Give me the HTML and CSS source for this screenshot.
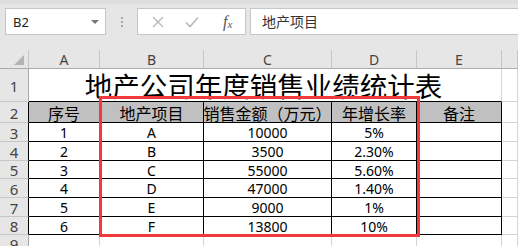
FILE: index.html
```html
<!DOCTYPE html>
<html lang="zh-CN">
<head>
    <meta charset="UTF-8">
    <title>地产公司年度销售业绩统计表</title>
    <link rel="stylesheet" href="styles.css">
</head>
<body>
    <div class="toolbar">
        <div class="namebox">
            <span>B2</span>
            <span class="caret"></span>
        </div>
        <div class="grip"><i></i><i></i><i></i></div>
        <div class="fxbox">
            <svg class="btn" width="12" height="12" viewBox="0 0 12 12">
                <path d="M1 1 L11 11 M11 1 L1 11" stroke="#b8b8b8" stroke-width="1.4" fill="none"/>
            </svg>
            <svg class="btn" width="14" height="12" viewBox="0 0 14 12">
                <path d="M1 6.5 L5 10.5 L13 1.5" stroke="#b8b8b8" stroke-width="1.6" fill="none"/>
            </svg>
            <span class="fx">f<sub>x</sub></span>
        </div>
        <div class="formula">地产项目</div>
    </div>

    <div class="sheet">
        <!-- column headers -->
        <div class="corner"><span class="tri"></span></div>
        <div class="colhead">A</div>
        <div class="colhead">B</div>
        <div class="colhead">C</div>
        <div class="colhead">D</div>
        <div class="colhead">E</div>
        <div class="colhead"></div>

        <!-- row 1: merged title -->
        <div class="rowhead">1</div>
        <div class="title">地产公司年度销售业绩统计表</div>
        <div class="cell grid after-title"></div>

        <!-- row 2: table header -->
        <div class="rowhead edge">2</div>
        <div class="cell th">序号</div>
        <div class="cell th">地产项目</div>
        <div class="cell th">销售金额（万元）</div>
        <div class="cell th">年增长率</div>
        <div class="cell th">备注</div>
        <div class="cell grid"></div>

        <div class="rowhead edge">3</div>
        <div class="cell td">1</div><div class="cell td">A</div><div class="cell td">10000</div><div class="cell td">5%</div><div class="cell td"></div><div class="cell grid"></div>

        <div class="rowhead edge">4</div>
        <div class="cell td">2</div><div class="cell td">B</div><div class="cell td">3500</div><div class="cell td">2.30%</div><div class="cell td"></div><div class="cell grid"></div>

        <div class="rowhead edge">5</div>
        <div class="cell td">3</div><div class="cell td">C</div><div class="cell td">55000</div><div class="cell td">5.60%</div><div class="cell td"></div><div class="cell grid"></div>

        <div class="rowhead edge">6</div>
        <div class="cell td">4</div><div class="cell td">D</div><div class="cell td">47000</div><div class="cell td">1.40%</div><div class="cell td"></div><div class="cell grid"></div>

        <div class="rowhead edge">7</div>
        <div class="cell td">5</div><div class="cell td">E</div><div class="cell td">9000</div><div class="cell td">1%</div><div class="cell td"></div><div class="cell grid"></div>

        <div class="rowhead edge">8</div>
        <div class="cell td">6</div><div class="cell td">F</div><div class="cell td">13800</div><div class="cell td">10%</div><div class="cell td"></div><div class="cell grid"></div>

        <div class="rowhead">9</div>
        <div class="cell blank"></div><div class="cell blank"></div><div class="cell blank"></div><div class="cell blank"></div><div class="cell blank"></div><div class="cell blank"></div>
    </div>

    <div class="highlight"></div>
</body>
</html>
```

FILE: styles.css
```css
body {
    margin: 0;
    background: #ffffff;
    font-family: "Noto Sans", "Noto Sans CJK SC", sans-serif;
    width: 518px;
    height: 246px;
    overflow: hidden;
    position: relative;
}
.toolbar {
    display: flex;
    align-items: center;
    height: 50px;
    padding-bottom: 11px;
    box-sizing: border-box;
    background: #e6e6e6;
    border-top: 4px solid #dedede;
}
.namebox {
    display: flex;
    align-items: center;
    justify-content: space-between;
    width: 101px;
    height: 27px;
    margin-left: 5px;
    padding: 0 6px 0 7px;
    box-sizing: border-box;
    background: #ffffff;
    border: 1px solid #c6c6c6;
    font-size: 13px;
    color: #222;
}
.caret {
    width: 0;
    height: 0;
    border-left: 4px solid transparent;
    border-right: 4px solid transparent;
    border-top: 4px solid #777;
}
.grip {
    display: flex;
    flex-direction: column;
    gap: 2px;
    margin: 0 14px 0 15px;
}
.grip i {
    width: 2px;
    height: 2px;
    background: #a8a8a8;
}
.fxbox {
    display: flex;
    align-items: center;
    width: 109px;
    height: 27px;
    box-sizing: border-box;
    background: #ffffff;
    border: 1px solid #c6c6c6;
    padding-left: 14px;
}
.fxbox .btn {
    margin-right: 21px;
}
.fxbox .btn + .btn {
    margin-right: 24px;
}
.fx {
    font-family: "Liberation Serif", serif;
    font-style: italic;
    font-size: 16px;
    line-height: 1;
    color: #555;
}
.fx sub {
    font-size: 11px;
    vertical-align: -1px;
}
.formula {
    flex: 1;
    height: 27px;
    margin-left: 4px;
    padding-left: 11px;
    box-sizing: border-box;
    background: #ffffff;
    border: 1px solid #c6c6c6;
    border-right: none;
    font-family: "Noto Sans CJK SC", sans-serif;
    font-size: 14px;
    line-height: 25px;
    color: #333;
}
.sheet {
    display: grid;
    grid-template-columns: 29px 71px 104px 128px 85px 85px 1fr;
    grid-template-rows: 19px 33px 21px 19px 19px 18px 19px 19px 18px 1fr;
    height: 196px;
}
.sheet > div {
    box-sizing: border-box;
    display: flex;
    align-items: center;
    justify-content: center;
    line-height: 1;
}
.corner {
    background: #e6e6e6;
    border-right: 1px solid #c6c6c6;
    border-bottom: 1px solid #ababab;
    position: relative;
}
.tri {
    position: absolute;
    right: 4px;
    bottom: 3px;
    width: 0;
    height: 0;
    border-left: 10px solid transparent;
    border-bottom: 10px solid #b4b4b4;
}
.colhead {
    background: #e6e6e6;
    border-right: 1px solid #c6c6c6;
    border-bottom: 1px solid #ababab;
    font-size: 14px;
    color: #444;
    padding-top: 2px;
}
.rowhead {
    background: #e6e6e6;
    border-right: 1px solid #ababab;
    border-bottom: 1px solid #c6c6c6;
    font-size: 15px;
    color: #444;
    padding-top: 2px;
}
.rowhead.edge {
    border-right-color: #000;
}
.title {
    grid-column: 2 / 7;
    border-right: 1px solid #d4d4d4;
    border-bottom: 1px solid #000;
    font-family: "Noto Sans CJK SC", sans-serif;
    font-size: 27.5px;
    color: #000;
    align-items: flex-end !important;
    padding-bottom: 2px;
    padding-right: 3px;
}
.cell {
    border-right: 1px solid #000;
    border-bottom: 1px solid #000;
    color: #000;
    white-space: nowrap;
}
.cell.grid {
    border-right: 1px solid #d4d4d4;
    border-bottom: 1px solid #d4d4d4;
}
.cell.after-title {
    border-bottom-color: #d4d4d4;
}
.cell.blank {
    border-right: 1px solid #d4d4d4;
    border-bottom: none;
}
.th {
    background: #c0c0c0;
    font-family: "Noto Sans CJK SC", sans-serif;
    font-size: 16px;
    padding-top: 1px;
}
.td {
    font-size: 14px;
    padding-top: 2px;
}
.highlight {
    position: absolute;
    left: 99px;
    top: 96px;
    width: 321px;
    height: 141px;
    box-sizing: border-box;
    border: 3px solid #f23a3a;
}
```
